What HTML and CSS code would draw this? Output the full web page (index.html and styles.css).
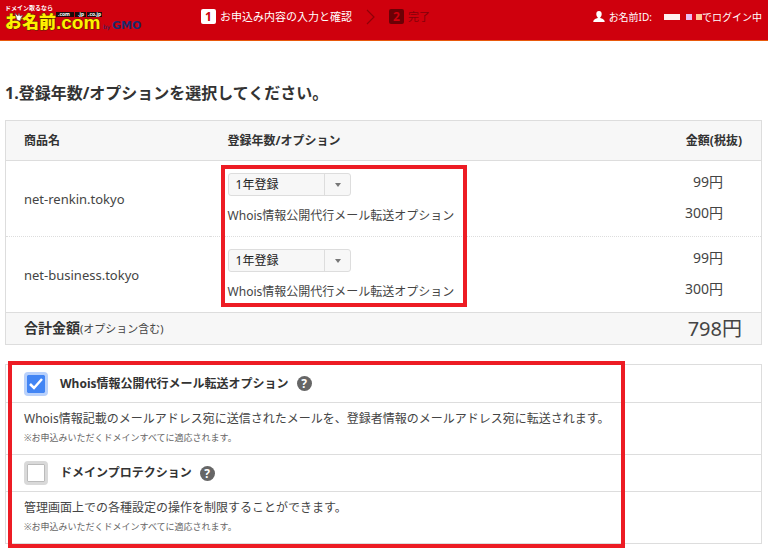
FILE: index.html
```
<!DOCTYPE html>
<html lang="ja">
<head>
    <meta charset="UTF-8">
    <meta name="viewport" content="width=device-width, initial-scale=1.0">
    <title>お申込み内容の入力と確認</title>
    <link rel="stylesheet" href="styles.css">
</head>
<body>
    <header class="header">
        <a href="#" class="logo" aria-label="お名前.com by GMO">
            <svg width="140" height="32" viewBox="0 0 140 32">
                <text class="logo-lead" x="0" y="6">ドメイン取るなら</text>
                <text class="logo-name" x="0" y="24">お名前</text>
                <text class="logo-dot" x="51" y="25">.com</text>
                <path d="M51 8h18v5H51zM70 8h11v5H70zM82 8h15v5H82z" fill="#1a0a0a"/>
                <text class="logo-tag" x="53" y="12">.com</text>
                <text class="logo-tag" x="73" y="12">.jp</text>
                <text class="logo-tag" x="83" y="12">.co.jp</text>
                <path d="M10 9l3 3 1-3 1 3 3-1-2 3-1 3-3-1z" fill="#fff" stroke="#444" stroke-width=".5"/>
                <text class="logo-by" x="98" y="25">by</text>
                <text class="logo-gmo" x="107" y="25">GMO</text>
            </svg>
        </a>
        <ol class="steps">
            <li class="step"><span class="num">1</span>お申込み内容の入力と確認</li>
            <li class="arrow">
                <svg width="9" height="16" viewBox="0 0 9 16"><path d="M1 1l7 7-7 7" fill="none" stroke="#8f0008" stroke-width="1.2"/></svg>
            </li>
            <li class="step next"><span class="num">2</span>完了</li>
        </ol>
        <div class="login">
            <svg width="12" height="11" viewBox="0 0 12 11"><path d="M6 0C4.200 0 3.300 1.300 3.300 3c0 1.500.6 2.600 1.400 3.200v.9C3 7.800.3 8.300.3 11h11.400c0-2.700-2.700-3.200-4.400-3.900v-.9C8.100 5.600 8.700 4.500 8.700 3 8.700 1.300 7.800 0 6 0z" fill="#fff"/></svg>
            <span class="login-id">お名前ID:</span>
            <span class="mask"><i class="m1"></i><i class="m2"></i><i class="m3"></i><i class="m4"></i></span>
            <span>でログイン中</span>
        </div>
    </header>

    <main class="main">
        <h1>1.登録年数/オプションを選択してください。</h1>

        <!-- Order -->
        <div class="order">
            <table>
                <thead>
                    <tr>
                        <th class="col-name">商品名</th>
                        <th>登録年数/オプション</th>
                        <th class="col-price">金額(税抜)</th>
                    </tr>
                </thead>
                <tbody>
                    <tr>
                        <td>net-renkin.tokyo</td>
                        <td>
                            <select class="years" aria-label="net-renkin.tokyo 登録年数">
                                <option>1年登録</option>
                                <option>2年登録</option>
                            </select>
                            <p class="option-name">Whois情報公開代行メール転送オプション</p>
                        </td>
                        <td class="price"><p>99円</p><p>300円</p></td>
                    </tr>
                    <tr>
                        <td>net-business.tokyo</td>
                        <td>
                            <select class="years" aria-label="net-business.tokyo 登録年数">
                                <option>1年登録</option>
                                <option>2年登録</option>
                            </select>
                            <p class="option-name">Whois情報公開代行メール転送オプション</p>
                        </td>
                        <td class="price"><p>99円</p><p>300円</p></td>
                    </tr>
                </tbody>
                <tfoot>
                    <tr>
                        <td colspan="2"><strong>合計金額</strong><small>(オプション含む)</small></td>
                        <td class="total">798円</td>
                    </tr>
                </tfoot>
            </table>
            <div class="mark mark-order"></div>
        </div>

        <!-- Options -->
        <div class="options">
            <div class="option-head">
                <input type="checkbox" id="whois" checked>
                <label for="whois">Whois情報公開代行メール転送オプション</label>
                <button class="help" aria-label="ヘルプ">?</button>
            </div>
            <div class="option-body">
                <p>Whois情報記載のメールアドレス宛に送信されたメールを、登録者情報のメールアドレス宛に転送されます。</p>
                <p class="note">※お申込みいただくドメインすべてに適応されます。</p>
            </div>
            <div class="option-head">
                <input type="checkbox" id="protection">
                <label for="protection">ドメインプロテクション</label>
                <button class="help" aria-label="ヘルプ">?</button>
            </div>
            <div class="option-body">
                <p>管理画面上での各種設定の操作を制限することができます。</p>
                <p class="note">※お申込みいただくドメインすべてに適応されます。</p>
            </div>
            <div class="mark mark-options"></div>
        </div>
    </main>
</body>
</html>
```
FILE: styles.css
```
* {
    box-sizing: border-box;
}

body {
    margin: 0;
    font-family: "Noto Sans", "Noto Sans CJK JP", sans-serif;
    font-size: 12px;
    line-height: 18px;
    color: #444;
    background-color: #fff;
}

p {
    margin: 0;
}

.header {
    display: flex;
    align-items: center;
    height: 41px;
    padding: 0 6px 0 5px;
    background-color: #cf000d;
    border-bottom: 1px solid #e8590c;
    color: #fff;
    font-size: 11px;
}

.logo {
    display: flex;
}

.logo-lead {
    font-size: 6px;
    font-weight: bold;
    fill: #fff;
}

.logo-name,
.logo-dot {
    font-size: 17px;
    font-weight: 900;
    fill: #fff200;
    stroke: #5a2a00;
    stroke-width: 1px;
    paint-order: stroke;
}

.logo-dot {
    font-family: "Liberation Sans", sans-serif;
    font-size: 19px;
}

.logo-tag {
    font-size: 5px;
    font-weight: bold;
    fill: #fff;
}

.logo-by,
.logo-gmo {
    font-family: "DejaVu Sans", sans-serif;
    font-size: 6px;
    fill: #1d2a6b;
}

.logo-gmo {
    font-size: 11px;
    font-weight: bold;
}

.steps {
    display: flex;
    align-items: center;
    gap: 14px;
    margin: 0 0 7px 56px;
    padding: 0;
    list-style: none;
}

.step {
    display: flex;
    align-items: center;
    gap: 4px;
}

.arrow {
    display: flex;
}

.num {
    width: 15px;
    height: 15px;
    border-radius: 2px;
    background-color: #fff;
    color: #cf000d;
    font-size: 12px;
    font-weight: bold;
    line-height: 15px;
    text-align: center;
}

.next {
    color: #85000a;
}

.next .num {
    background-color: #6b0005;
    color: #cf000d;
}

.login {
    display: flex;
    align-items: center;
    margin: 0 0 7px auto;
    font-size: 10px;
}

.login-id {
    margin: 0 12px 0 4px;
}

.mask {
    display: flex;
}

.mask i {
    width: 6px;
    height: 6px;
}

.mask .m1 {
    width: 16px;
    margin-right: 6px;
    background-color: #fff0f0;
}

.mask .m2 {
    background-color: #eabcf0;
}

.mask .m3 {
    width: 4px;
    background-color: #dc0018;
}

.mask .m4 {
    background-color: #ffc896;
}

.main {
    padding: 41px 6px 11px 5px;
}

h1 {
    margin: 0 0 16px;
    font-size: 16px;
    line-height: 22px;
    color: #333;
}

.order {
    position: relative;
    margin-bottom: 19px;
}

table {
    width: 100%;
    table-layout: fixed;
    border: 1px solid #ddd;
    border-collapse: collapse;
}

th,
td {
    padding: 0 19px 0 18px;
    text-align: left;
}

th {
    height: 40px;
    background-color: #f7f7f7;
    border-bottom: 1px solid #ddd;
    color: #333;
}

.col-name {
    width: 27%;
}

.col-price {
    width: 24%;
    text-align: right;
}

tbody td {
    height: 76px;
    font-size: 13px;
}

tbody tr + tr td {
    border-top: 1px dotted #ddd;
}

.years {
    display: block;
    width: 123px;
    height: 23px;
    margin-bottom: 11px;
    padding: 0 7px;
    border: 1px solid #ddd;
    border-radius: 3px;
    background: url("data:image/svg+xml,%3Csvg xmlns='http://www.w3.org/2000/svg' width='26' height='21'%3E%3Cpath d='M.5 0v21' stroke='%23ddd'/%3E%3Cpath d='M11 9h6l-3 4z' fill='%23777'/%3E%3C/svg%3E") right center no-repeat #f7f7f7;
    appearance: none;
    font-family: inherit;
    font-size: 12px;
    color: #222;
}

.option-name {
    font-size: 12px;
    white-space: nowrap;
}

.price {
    padding-right: 38px;
    padding-bottom: 3px;
    text-align: right;
}

.price p {
    font-size: 14px;
    line-height: 31px;
}

tfoot td {
    height: 32px;
    background-color: #f7f7f7;
    border-top: 1px solid #ddd;
}

tfoot strong {
    font-size: 14px;
    color: #333;
}

tfoot small {
    font-size: 11px;
}

.total {
    text-align: right;
    font-size: 20px;
}

.options {
    position: relative;
    border: 1px solid #ddd;
}

.option-head {
    display: flex;
    align-items: center;
    height: 38px;
    padding: 0 18px;
    border-bottom: 1px solid #ddd;
}

.option-head label {
    margin: 0 8px 0 12px;
    font-weight: bold;
    color: #333;
}

.option-head input {
    width: 24px;
    height: 24px;
    margin: 0;
    border: 3px solid #d9d9d9;
    border-radius: 4px;
    background-color: #fff;
    box-shadow: inset 0 0 0 1px #bbb;
    appearance: none;
}

.option-head input:checked {
    border-color: #b9d1fb;
    background: url("data:image/svg+xml,%3Csvg xmlns='http://www.w3.org/2000/svg' width='18' height='18'%3E%3Cpath d='M3 9l4 4 8-9' fill='none' stroke='white' stroke-width='2.5'/%3E%3C/svg%3E") center no-repeat #4285f4;
    background-clip: padding-box;
    box-shadow: none;
}

.help {
    width: 15px;
    height: 15px;
    padding: 0;
    border: none;
    border-radius: 50%;
    background-color: #666;
    color: #fff;
    font-family: inherit;
    font-size: 12px;
    font-weight: bold;
    line-height: 15px;
    cursor: pointer;
}

.option-body {
    padding: 6px 18px 7px;
}

.option-body + .option-head {
    border-top: 1px solid #ddd;
}

.option-body p {
    line-height: 20px;
    white-space: nowrap;
}

.option-body .note {
    font-size: 9px;
    line-height: 18px;
    color: #666;
}

/* red frames lying over the table and the options */
.mark {
    position: absolute;
    border: 4px solid #ed1c24;
    pointer-events: none;
}

.mark-order {
    top: 45px;
    left: 216px;
    width: 246px;
    height: 142px;
}

.mark-options {
    top: -4px;
    left: 2px;
    width: 617px;
    bottom: -5px;
}
```
